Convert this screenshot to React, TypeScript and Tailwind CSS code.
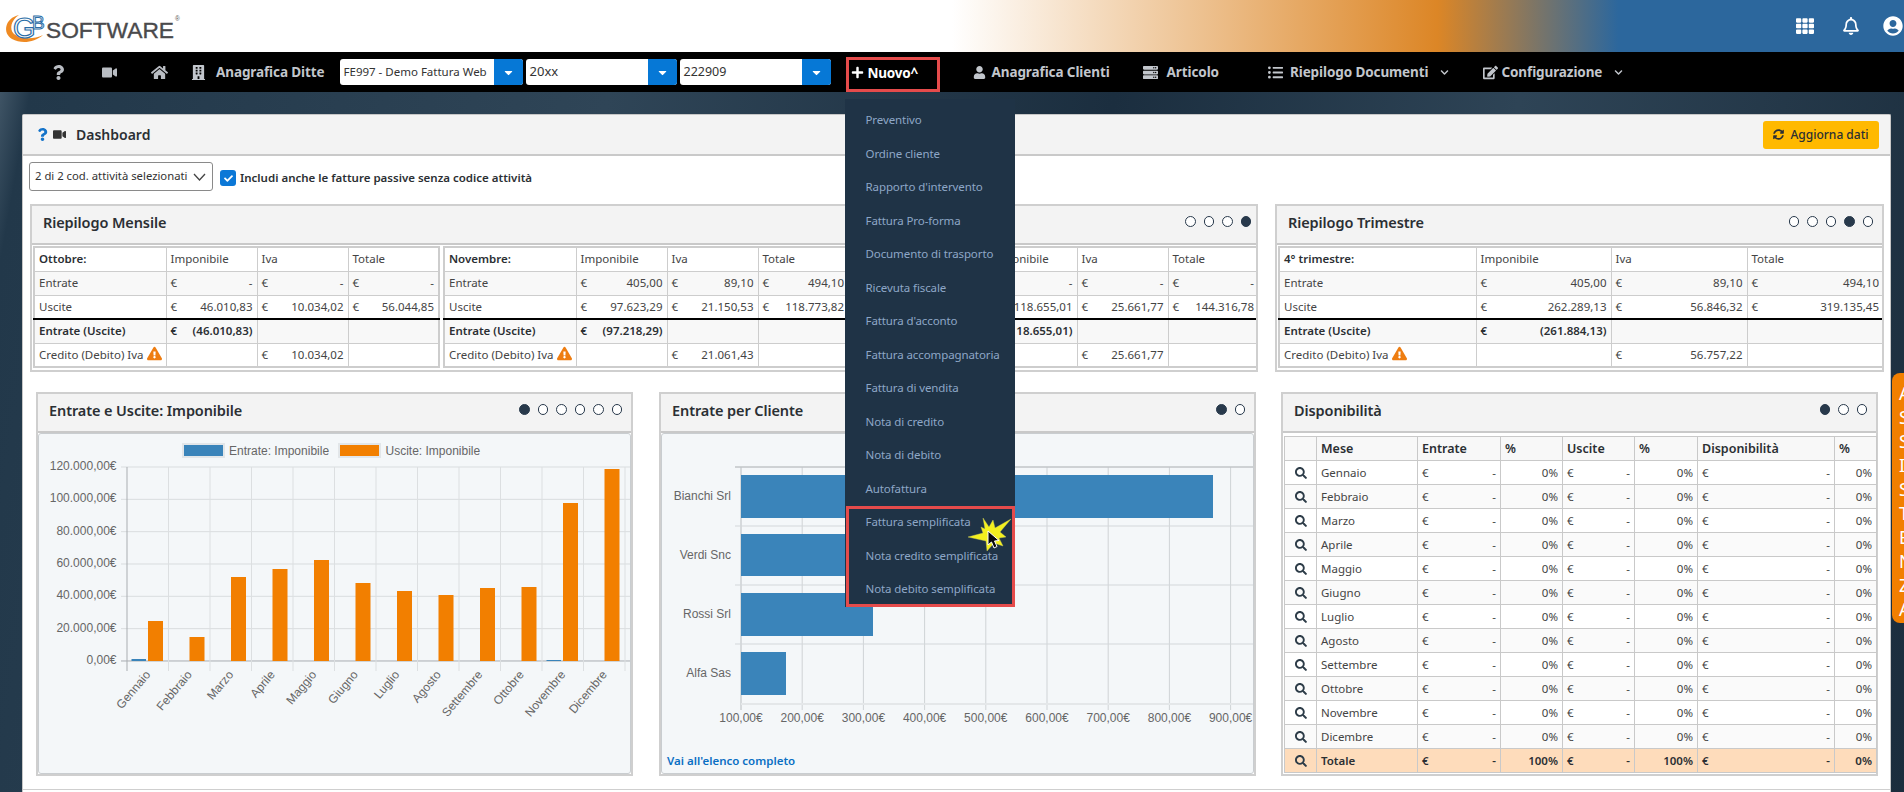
import React from "react";
import { FaQuestion, FaVideo, FaHome, FaBuilding, FaUser, FaServer, FaListUl, FaEdit, FaPlus, FaTh, FaRegBell, FaUserCircle, FaSyncAlt, FaExclamationTriangle, FaSearch, FaCheck, FaChevronDown, FaCaretDown } from "react-icons/fa";

const Dots = ({ n, a }: { n: number; a: number }) => (
  <div className="flex gap-[8px] mt-[10px]">
    {Array.from({ length: n }).map((_, i) => (
      <span key={i} className={i === a ? "w-[10.5px] h-[10.5px] rounded-full bg-[#28394b] border-[1.5px] border-[#28394b]" : "w-[10.5px] h-[10.5px] rounded-full bg-white border-[1.5px] border-[#28394b]"} />
    ))}
  </div>
);

const CardHead = ({ title, n, a, pr }: { title: string; n?: number; a?: number; pr?: string }) => (
  <div className={"h-[39px] shrink-0 bg-[#f3f3f3] border-b-[2px] border-[#c9c9c9] flex justify-between pl-[11px] " + (pr ?? "pr-[9px]")}>
    <div className="text-[14.5px] font-semibold text-[#2b2f33] mt-[6px] tracking-[-0.1px]">{title}</div>
    {n ? <Dots n={n} a={a ?? 0} /> : null}
  </div>
);

const Eur = ({ v, b }: { v: string; b?: boolean }) => (
  <div className={b ? "flex justify-between font-semibold text-[#2b2f33]" : "flex justify-between"}>
    <span>€</span>
    <span>{v}</span>
  </div>
);

const Warn = () => <FaExclamationTriangle className="inline-block text-[#ee7d11] text-[15px] ml-[3px] align-[-2px]" />;

type Cols = [string, string, string, string];
const Riepilogo = ({ label, cols, rows, cls }: { label: string; cols: Cols; rows: string[][]; cls: string }) => {
  const td = "border border-[#cdcdcd] px-[4px] h-[24px] py-0 whitespace-nowrap overflow-hidden leading-[16px]";
  return (
    <table className={"table-fixed border-collapse border-2 border-[#cdcdcd] shrink-0 text-[11.5px] text-[#444] " + cls}>
      <colgroup>
        <col className={cols[0]} />
        <col className={cols[1]} />
        <col className={cols[2]} />
        <col className={cols[3]} />
      </colgroup>
      <tbody>
        <tr>
          <td className={td + " font-semibold text-[#2b2f33]"}>{label}</td>
          <td className={td}>Imponibile</td>
          <td className={td}>Iva</td>
          <td className={td}>Totale</td>
        </tr>
        <tr className="bg-[#f8f8f8]">
          <td className={td}>Entrate</td>
          {rows[0].map((v, i) => <td key={i} className={td}><Eur v={v} /></td>)}
        </tr>
        <tr>
          <td className={td}>Uscite</td>
          {rows[1].map((v, i) => <td key={i} className={td}><Eur v={v} /></td>)}
        </tr>
        <tr className="bg-[#f8f8f8] border-t-[2px] border-t-black">
          <td className={td + " font-semibold text-[#2b2f33] border-t-[2px] border-t-black"}>Entrate (Uscite)</td>
          <td className={td + " border-t-[2px] border-t-black"}><Eur v={rows[2][0]} b /></td>
          <td className={td + " border-t-[2px] border-t-black"} />
          <td className={td + " border-t-[2px] border-t-black"} />
        </tr>
        <tr>
          <td className={td}>Credito (Debito) Iva<Warn /></td>
          <td className={td} />
          <td className={td}><Eur v={rows[3][0]} /></td>
          <td className={td} />
        </tr>
      </tbody>
    </table>
  );
};

const monthCols: Cols = ["w-[132px]", "w-[91px]", "w-[91px]", "w-[91px]"];
const triCols: Cols = ["w-[197px]", "w-[135px]", "w-[136px]", "w-[137px]"];

const BAR1: [number, number][] = [[659, 621], [661, 637], [661, 577], [661, 569], [661, 560], [661, 583], [661, 591], [661, 595], [661, 588], [661, 587], [660, 503], [661, 469]];
const MONTHS = ["Gennaio", "Febbraio", "Marzo", "Aprile", "Maggio", "Giugno", "Luglio", "Agosto", "Settembre", "Ottobre", "Novembre", "Dicembre"];
const Y1 = ["120.000,00€", "100.000,00€", "80.000,00€", "60.000,00€", "40.000,00€", "20.000,00€", "0,00€"];

const ChartOne = () => (
  <svg viewBox="0 0 594 340" className="w-[594px] h-[340px] block" fontFamily="'Liberation Sans', Arial, sans-serif" fontSize="12" fill="#666">
    <rect x="144" y="10" width="41" height="13" fill="#3a84ba" stroke="#e2e6e9" strokeWidth="2" />
    <text x="190" y="20.5">Entrate: Imponibile</text>
    <rect x="300" y="10" width="41" height="13" fill="#f27f00" stroke="#e2e6e9" strokeWidth="2" />
    <text x="346.5" y="20.5">Uscite: Imponibile</text>
    {Y1.map((t, i) => {
      const y = 33 + i * 32.33;
      return (
        <g key={t}>
          <line x1="82" x2="594" y1={y} y2={y} stroke={i === 6 ? "#a9adb1" : "#d9dddf"} strokeWidth="1" />
          <text x="77.5" y={y + 3} textAnchor="end">{t}</text>
        </g>
      );
    })}
    {Array.from({ length: 13 }).map((_, i) => {
      const x = 88 + i * 41.5;
      return <line key={i} x1={x} x2={x} y1="33" y2="237" stroke={i === 0 ? "#a9adb1" : "#dcdfe1"} />;
    })}
    {BAR1.map(([b, o], i) => {
      const x = 88 + i * 41.5;
      return (
        <g key={i}>
          {b < 661 ? <rect x={x + 4.5} y={b - 434} width="14.5" height={661 - b} fill="#3a84ba" /> : null}
          <rect x={x + 21} y={o - 434} width="15" height={661 - o} fill="#f27f00" />
        </g>
      );
    })}
    {MONTHS.map((m, i) => {
      const x = 88 + i * 41.5 + 24;
      return <text key={m} x={x} y="241" textAnchor="end" transform={`rotate(-50 ${x} 241)`}>{m}</text>;
    })}
  </svg>
);

const CLIENTS: [string, number, number, number][] = [["Bianchi Srl", 475, 43, 472], ["Verdi Snc", 534, 42, 240], ["Rossi Srl", 593, 43, 132], ["Alfa Sas", 652, 43, 45]];
const X2 = ["100,00€", "200,00€", "300,00€", "400,00€", "500,00€", "600,00€", "700,00€", "800,00€", "900,00€"];

const ChartTwo = () => (
  <svg viewBox="0 0 594 340" className="w-[594px] h-[340px] block" fontFamily="'Liberation Sans', Arial, sans-serif" fontSize="12" fill="#666">
    {X2.map((t, i) => {
      const x = 79 + i * 61.2;
      return (
        <g key={t}>
          <line x1={x} x2={x} y1="33" y2="276" stroke={i === 0 ? "#b8bcbf" : "#cfd3d6"} />
          <text x={x} y="288" textAnchor="middle">{t}</text>
        </g>
      );
    })}
    {[33, 92, 151, 210].map((y) => <line key={y} x1="73" x2="594" y1={y} y2={y} stroke="#d3d7da" />)}
    <line x1="73" x2="594" y1="33" y2="33" stroke="#b8bcbf" />
    <line x1="79" x2="594" y1="270" y2="270" stroke="#e4e7e9" strokeWidth="2" />
    {CLIENTS.map(([n, y, h, w]) => (
      <g key={n}>
        <rect x="79" y={y - 434} width={w} height={h} fill="#3a84ba" />
        <text x="69" y={y - 434 + 25} textAnchor="end">{n}</text>
      </g>
    ))}
  </svg>
);

const MENU = ["Preventivo", "Ordine cliente", "Rapporto d'intervento", "Fattura Pro-forma", "Documento di trasporto", "Ricevuta fiscale", "Fattura d'acconto", "Fattura accompagnatoria", "Fattura di vendita", "Nota di credito", "Nota di debito", "Autofattura", "Fattura semplificata", "Nota credito semplificata", "Nota debito semplificata"];

const SelectBox = ({ text, cls, tcls }: { text: string; cls: string; tcls: string }) => (
  <div className={"h-[26px] bg-white rounded-[3px] flex justify-between overflow-hidden " + cls}>
    <span className={"self-center pl-[4px] text-[#333] whitespace-nowrap " + tcls}>{text}</span>
    <span className="w-[29px] h-full bg-[#0678d6] flex items-center justify-center text-white text-[13px]"><FaCaretDown /></span>
  </div>
);

const NavItem = ({ icon, text, cls, caret }: { icon: React.ReactNode; text: string; cls: string; caret?: boolean }) => (
  <div className={"flex items-center text-[#c2c6cc] font-bold text-[13.5px] whitespace-nowrap " + cls}>
    {icon}
    <span className="tracking-[-0.1px]">{text}</span>
    {caret ? <FaChevronDown className="ml-[12px] text-[9px]" /> : null}
  </div>
);

const Logo = () => (
  <svg width="190" height="44" viewBox="0 0 190 44" className="block" fontFamily="'Liberation Sans', Arial, sans-serif">
    <path d="M19 10 C 5 13, 2 28, 12 34 C 21 39 34 38 43 30 C 33 35 20 34 14 29 C 9 24 11 15 19 10Z" fill="#ef8a22" />
    <text x="13" y="33" fontSize="29" fill="#fff" stroke="#2a6da6" strokeWidth="1.2">G</text>
    <text x="32" y="24" fontSize="19" fill="#fff" stroke="#2a6da6" strokeWidth="1">B</text>
    <text x="46" y="33" fontSize="21.5" fill="#4a4a4c" stroke="#4a4a4c" strokeWidth="0.35" textLength="128" lengthAdjust="spacingAndGlyphs">SOFTWARE</text>
    <text x="175" y="16" fontSize="6.5" fill="#555">®</text>
  </svg>
);

const Star = () => (
  <svg width="48" height="38" viewBox="0 0 48 38" className="absolute left-[121px] top-[418px]">
    <polygon fill="#f4f01e" stroke="#cfcf60" strokeWidth="0.4" points="17,1 23,10 27,3 29,11 45,2 34,15 40,20 33,21 37,29 28,26 21,34 20,24 2,20 17,16 15,10 19,12" />
    <path d="M22 14 L22 28 L25.5 25 L28 31 L31 29.5 L28.5 24 L33 23.5 Z" fill="#0b0b0b" stroke="#fff" strokeWidth="1" />
  </svg>
);

export default function App() {
  const dispoTd = "border border-[#c9c9c9] px-[4px] py-0 h-[24px] leading-[16px]";
  return (
    <div className="relative w-[1904px] h-[792px] overflow-hidden flex flex-col font-['Noto_Sans',sans-serif] bg-[#1d3041]">
      {/* top header */}
      <header className="h-[52px] shrink-0 flex items-center justify-between bg-[linear-gradient(90deg,#fff_0%,#fff_50%,#dc8626_75.5%,#2c679d_85%,#2c679d_100%)]">
        <div className="pl-0 pt-[2px]"><Logo /></div>
        <div className="flex items-center text-white pr-[1px]">
          <FaTh className="text-[18px] mr-[28px]" />
          <FaRegBell className="text-[18px] mr-[23px]" />
          <FaUserCircle className="text-[20px]" />
        </div>
      </header>

      {/* nav */}
      <nav className="h-[40px] shrink-0 bg-black flex items-center">
        <FaQuestion className="ml-[51px] text-[#b9bdc3] text-[15px]" />
        <FaVideo className="ml-[36px] text-[#b9bdc3] text-[15px]" />
        <FaHome className="ml-[34px] text-[#b9bdc3] text-[17px]" />
        <NavItem cls="ml-[23px]" icon={<FaBuilding className="mr-[10px] text-[15px]" />} text="Anagrafica Ditte" />
        <SelectBox cls="ml-[15px] w-[183px]" tcls="text-[11.5px]" text="FE997 - Demo Fattura Web" />
        <SelectBox cls="ml-[3px] w-[151px]" tcls="text-[13px]" text="20xx" />
        <SelectBox cls="ml-[3px] w-[151px]" tcls="text-[12.5px]" text="222909" />
        <div className="relative ml-[15px] w-[94px] h-[35px] mt-[5px] border-[3px] border-[#e54b4b] flex items-center text-white font-bold text-[13.5px] pl-[2px] pb-[2px]">
          <FaPlus className="text-[13px] mr-[4px] mb-[2px]" />
          <span className="tracking-[-0.2px]">Nuovo^</span>
          <div className="absolute left-[-4px] top-[39px] w-[170px] h-[508px] bg-[#1f3346] pt-[4px] z-20">
            {MENU.map((m) => (
              <div key={m} className="h-[33.5px] flex items-center pl-[21px] text-[11.5px] tracking-[-0.1px] font-normal text-[#8ea7c7] whitespace-nowrap">{m}</div>
            ))}
            <div className="absolute left-[1px] top-[407px] w-[169px] h-[101px] border-[3px] border-[#e54b4b]" />
            <Star />
          </div>
        </div>
        <NavItem cls="ml-[33px]" icon={<FaUser className="mr-[6px] text-[13px]" />} text="Anagrafica Clienti" />
        <NavItem cls="ml-[33px]" icon={<FaServer className="mr-[9px] text-[15px]" />} text="Articolo" />
        <NavItem cls="ml-[49px]" caret icon={<FaListUl className="mr-[7px] text-[15px]" />} text="Riepilogo Documenti" />
        <NavItem cls="ml-[34px]" caret icon={<FaEdit className="mr-[3px] text-[15px]" />} text="Configurazione" />
      </nav>

      {/* body with background picture */}
      <main className="flex-1 pt-[22px] pl-[22px] pr-[13px] bg-[linear-gradient(100deg,#3f5465_0%,#22384a_1.5%,#2f4557_30%,#1b2e3f_55%,#2e4456_75%,#1b2d3d_100%)]">
        <div className="w-[1869px] h-[678px] bg-white border-l border-r border-t border-[#c6c6c6] rounded-t-[2px] text-[#444]">
          <div className="h-[41px] bg-[#f3f3f3] border-b-[2px] border-[#c9c9c9] flex items-center justify-between">
            <div className="flex items-center">
              <FaQuestion className="ml-[13px] text-[#1473c9] text-[13px]" />
              <FaVideo className="ml-[4px] text-[#333] text-[13px]" />
              <span className="ml-[10px] text-[14px] font-semibold text-[#2b2f33]">Dashboard</span>
            </div>
            <div className="mr-[11px] w-[116px] h-[28px] rounded-[3px] bg-[#ffb900] flex items-center justify-center text-[12px] text-[#2b2f33] font-medium">
              <FaSyncAlt className="mr-[6px] text-[11px]" />Aggiorna dati
            </div>
          </div>

          <div className="flex items-start h-[48px] pl-[6px] pt-[6px]">
            <div className="w-[184px] h-[29px] border border-[#8a8a8a] rounded-[3px] flex items-center justify-between pl-[5px] pr-[6px] text-[11.3px] text-[#333] whitespace-nowrap">
              <span>2 di 2 cod. attività selezionati</span>
              <svg width="13" height="8" viewBox="0 0 13 8" fill="none" stroke="#444" strokeWidth="1.3"><path d="M1 1 L6.5 7 L12 1" /></svg>
            </div>
            <div className="ml-[7px] mt-[8px] w-[16px] h-[16px] rounded-[3px] bg-[#0b78d7] flex items-center justify-center text-white text-[9px]"><FaCheck /></div>
            <span className="ml-[4px] mt-[7px] text-[11.5px] leading-[18px] font-semibold text-[#2b2f33] whitespace-nowrap">Includi anche le fatture passive senza codice attività</span>
          </div>

          {/* row 1 */}
          <div className="flex pl-[7px] gap-[17px]">
            <section className="w-[1228px] h-[168px] border-[2px] border-[#cfcfcf] flex flex-col overflow-hidden">
              <CardHead title="Riepilogo Mensile" n={4} a={3} pr="pr-[5px]" />
              <div className="flex gap-[3px] pl-[1px] pt-[1px]">
                <Riepilogo cls="w-[407px]" cols={monthCols} label="Ottobre:" rows={[["-", "-", "-"], ["46.010,83", "10.034,02", "56.044,85"], ["(46.010,83)"], ["10.034,02"]]} />
                <Riepilogo cls="w-[407px]" cols={monthCols} label="Novembre:" rows={[["405,00", "89,10", "494,10"], ["97.623,29", "21.150,53", "118.773,82"], ["(97.218,29)"], ["21.061,43"]]} />
                <Riepilogo cls="w-[407px]" cols={monthCols} label="Dicembre:" rows={[["-", "-", "-"], ["118.655,01", "25.661,77", "144.316,78"], ["(118.655,01)"], ["25.661,77"]]} />
              </div>
            </section>
            <section className="w-[609px] h-[168px] border-[2px] border-[#cfcfcf] flex flex-col overflow-hidden">
              <CardHead title="Riepilogo Trimestre" n={5} a={3} />
              <div className="pl-[1px] pt-[1px]">
                <Riepilogo cls="w-[605px]" cols={triCols} label="4° trimestre:" rows={[["405,00", "89,10", "494,10"], ["262.289,13", "56.846,32", "319.135,45"], ["(261.884,13)"], ["56.757,22"]]} />
              </div>
            </section>
          </div>

          {/* row 2 */}
          <div className="flex pl-[13px] gap-[26px] mt-[20px]">
            <section className="w-[597px] h-[384px] border-[2px] border-[#cfcfcf] flex flex-col">
              <CardHead title="Entrate e Uscite: Imponibile" n={6} a={0} />
              <div className="flex-1 bg-[#f4f7f9] border border-[#c9cdd0] rounded-[3px] overflow-hidden"><ChartOne /></div>
            </section>
            <section className="w-[597px] h-[384px] border-[2px] border-[#cfcfcf] flex flex-col">
              <CardHead title="Entrate per Cliente" n={2} a={0} />
              <div className="relative flex-1 bg-[#f4f7f9] border border-[#c9cdd0] rounded-[3px] overflow-hidden">
                <ChartTwo />
                <span className="absolute left-[5px] bottom-[4px] text-[11.5px] font-semibold text-[#0b6fc4] whitespace-nowrap">Vai all'elenco completo</span>
              </div>
            </section>
            <section className="w-[597px] h-[384px] -ml-[1px] border-[2px] border-[#cfcfcf] flex flex-col">
              <CardHead title="Disponibilità" n={3} a={0} />
              <div className="pl-[1px] pt-[3px]">
                <table className="table-fixed border-collapse w-[592px] text-[11.5px] text-[#444]">
                  <colgroup>
                    <col className="w-[32px]" /><col className="w-[101px]" /><col className="w-[83px]" /><col className="w-[62px]" /><col className="w-[72px]" /><col className="w-[63px]" /><col className="w-[137px]" /><col className="w-[42px]" />
                  </colgroup>
                  <tbody>
                    <tr className="bg-[#f8f8f8] font-semibold text-[#2b2f33] text-[12.5px]">
                      <td className={dispoTd} />
                      <td className={dispoTd}>Mese</td>
                      <td className={dispoTd}>Entrate</td>
                      <td className={dispoTd}>%</td>
                      <td className={dispoTd}>Uscite</td>
                      <td className={dispoTd}>%</td>
                      <td className={dispoTd}>Disponibilità</td>
                      <td className={dispoTd}>%</td>
                    </tr>
                    {MONTHS.map((m, i) => (
                      <tr key={m} className={i % 2 === 0 ? "bg-white" : "bg-[#fafafa]"}>
                        <td className={dispoTd + " text-center text-[#2d3c48]"}><FaSearch className="inline-block text-[12px]" /></td>
                        <td className={dispoTd}>{m}</td>
                        <td className={dispoTd}><Eur v="-" /></td>
                        <td className={dispoTd + " text-right"}>0%</td>
                        <td className={dispoTd}><Eur v="-" /></td>
                        <td className={dispoTd + " text-right"}>0%</td>
                        <td className={dispoTd}><Eur v="-" /></td>
                        <td className={dispoTd + " text-right"}>0%</td>
                      </tr>
                    ))}
                    <tr className="bg-[#fedcbb] font-semibold text-[#2b2f33]">
                      <td className={dispoTd + " text-center text-[#2d3c48]"}><FaSearch className="inline-block text-[12px]" /></td>
                      <td className={dispoTd}>Totale</td>
                      <td className={dispoTd}><Eur v="-" b /></td>
                      <td className={dispoTd + " text-right"}>100%</td>
                      <td className={dispoTd}><Eur v="-" b /></td>
                      <td className={dispoTd + " text-right"}>100%</td>
                      <td className={dispoTd}><Eur v="-" b /></td>
                      <td className={dispoTd + " text-right"}>0%</td>
                    </tr>
                  </tbody>
                </table>
              </div>
            </section>
          </div>

          <div className="mt-[13px] border-t-[1px] border-[#cfcfcf]" />
        </div>
      </main>

      {/* side tab */}
      <div className="absolute left-[1892px] top-[373px] w-[40px] h-[250px] rounded-l-[8px] bg-[#f27f00] text-white text-[18px] leading-[24px] pl-[7px] pt-[8px] z-10 flex flex-col">
        {"ASSISTENZA".split("").map((c, i) => <span key={i}>{c}</span>)}
      </div>
    </div>
  );
}
